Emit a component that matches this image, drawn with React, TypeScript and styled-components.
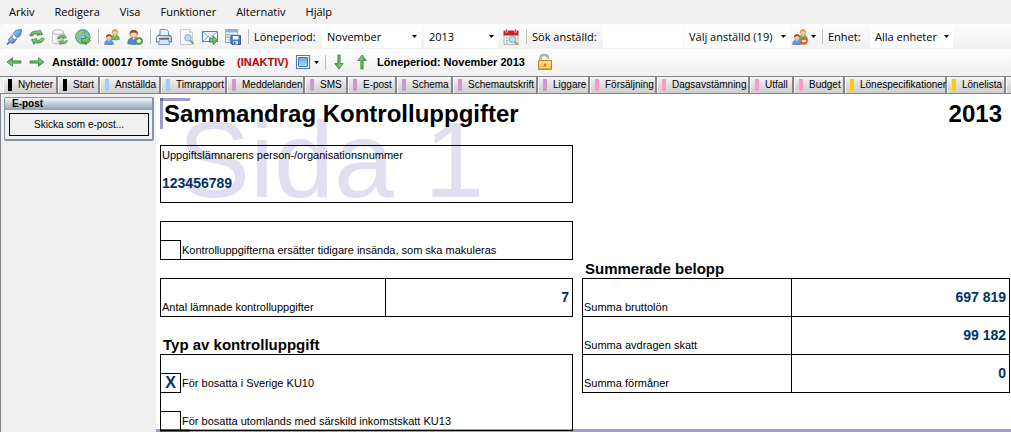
import React from "react";
import styled, { createGlobalStyle } from "styled-components";

const GlobalStyle = createGlobalStyle`
  *, *::before, *::after { box-sizing: border-box; }
  html, body, #root { height: 100%; }
  body { margin: 0; background: #f0f0f0; color: #000; font: 11px/14px "Liberation Sans", Arial, sans-serif; }
  button, input, select { font: inherit; color: inherit; margin: 0; border-radius: 0; }
  h1, h2, p { margin: 0; }
`;

const uiFont = `"Open Sans", "Segoe UI", sans-serif`;
const frame = "#84848e";
const value = "#003366";

const Window = styled.div`
  min-height: 100%;
  display: flex;
  flex-direction: column;
  overflow: hidden;
`;

const MenuBar = styled.nav`
  height: 24px;
  display: flex;
  align-items: center;
  gap: 20px;
  padding-left: 9px;
`;

const MenuItem = styled.button`
  padding: 0;
  border: 0;
  background: none;
  font: 11px/16px ${uiFont};
`;

const Bar = styled.div<{ $height: number }>`
  height: ${(p) => p.$height}px;
  flex: none;
  display: flex;
  align-items: center;
  padding-left: 6px;
  border-radius: 4px 0 0 4px;
  background: linear-gradient(#fdfdfd, #f0f0f0);
  font: 11px/16px ${uiFont};
  white-space: nowrap;
`;

const Tool = styled.button<{ $wide?: boolean }>`
  flex: none;
  width: ${(p) => (p.$wide ? 30 : 23)}px;
  height: 20px;
  padding: 0;
  border: 0;
  background: none;
  display: flex;
  align-items: center;
  gap: 3px;
  svg { flex: none; }
`;

const Separator = styled.span`
  flex: none;
  width: 1px;
  height: 15px;
  margin-right: 5px;
  background: #bdbdbd;
`;

const FieldLabel = styled.label<{ $width: number }>`
  flex: none;
  width: ${(p) => p.$width}px;
`;

const Picker = styled.span<{ $width: number; $gap?: number }>`
  position: relative;
  flex: none;
  width: ${(p) => p.$width}px;
  height: 23px;
  margin-right: ${(p) => p.$gap ?? 0}px;
  background: #fff;
  svg { position: absolute; right: 4px; top: 10px; pointer-events: none; }
`;

const Select = styled.select`
  appearance: none;
  width: 100%;
  height: 100%;
  padding: 0 0 0 5px;
  border: 0;
  background: none;
`;

const Search = styled.input`
  flex: none;
  width: 80px;
  height: 23px;
  margin-right: 1px;
  padding: 0 4px;
  border: 0;
  background: #fff;
`;

const Strong = styled.strong<{ $width: number; $alert?: boolean }>`
  flex: none;
  width: ${(p) => p.$width}px;
  font: bold 11px/14px "Liberation Sans", Arial, sans-serif;
  color: ${(p) => (p.$alert ? "#c00000" : "#000")};
`;

const Tabs = styled.div`
  flex: none;
  height: 18px;
  margin-top: 1px;
  display: flex;
  border-top: 1px solid ${frame};
  border-bottom: 1px solid ${frame};
  padding-left: 3px;
  overflow: hidden;
`;

const Tab = styled.button<{ $width: number }>`
  flex: none;
  width: ${(p) => p.$width}px;
  display: flex;
  align-items: center;
  padding: 0 0 0 4px;
  border: 0;
  border-left: 1px solid #fff;
  border-right: 2px solid ${frame};
  background: linear-gradient(#f6f6f6, #dedede 50%, #cfcfcf);
  font-size: 10px;
  white-space: nowrap;
`;

const TabMark = styled.span<{ $color: string }>`
  flex: none;
  width: 4px;
  height: 12px;
  margin-right: 6px;
  background: ${(p) => p.$color};
`;

const Body = styled.div`
  flex: 1;
  display: flex;
`;

const Sidebar = styled.aside`
  flex: none;
  width: 156px;
  padding: 3px 2px 0 3px;
  border-left: 1px solid ${frame};
`;

const Panel = styled.section`
  border: 1px solid #8494a4;
  border-right-width: 2px;
  border-bottom-width: 2px;
  border-radius: 2px;
  padding-bottom: 3px;
`;

const PanelTitle = styled.h2`
  padding-left: 7px;
  font-size: 10px;
  line-height: 12px;
  background: linear-gradient(#f4f6f8, #8ea0b2);
`;

const PanelButton = styled.button`
  display: block;
  width: calc(100% - 7px);
  height: 23px;
  margin: 3px 3px 0 4px;
  padding: 0;
  border: 1px solid #000;
  background: #f0f0f0;
  font-size: 10px;
`;

const Page = styled.main`
  position: relative;
  isolation: isolate;
  flex: 1;
  min-width: 0;
  padding: 7px 1px 1px 4px;
  background: #fff;
`;

const Watermark = styled.span`
  position: absolute;
  z-index: -1;
  left: 22px;
  top: 4px;
  font-size: 108px;
  line-height: 124px;
  color: #e0deef;
  white-space: nowrap;
`;

const Corner = styled.svg`
  position: absolute;
  z-index: -1;
  left: 4px;
  top: 4px;
`;

const PageEdge = styled.span`
  position: absolute;
  z-index: -1;
  left: 0;
  right: 0;
  bottom: 0;
  height: 3px;
  background: linear-gradient(to right, transparent 4px, #50509c 4px, #50509c 34px, transparent 34px), #9c9cce;
`;

const TitleRow = styled.header`
  display: flex;
  justify-content: space-between;
  padding: 0 8px 0 4px;
  margin-bottom: 18px;
  font-weight: bold;
  font-size: 24px;
  line-height: 26px;
`;

const Title = styled.h1`
  font: inherit;
`;

const Form = styled.div`
  display: grid;
  grid-template-columns: minmax(0, 413fr) minmax(0, 428fr);
  column-gap: 9px;
`;

const Box = styled.div`
  grid-column: 1;
  border: 1px solid #000;
  margin-bottom: 18px;
`;

const NumberBox = styled(Box)`
  padding: 2px 1px 11px;
`;

const BoldValue = styled.p`
  margin-top: 13px;
  font-weight: bold;
  font-size: 14px;
  line-height: 16px;
  color: ${value};
`;

const CheckBox = styled(Box)`
  display: flex;
  flex-direction: column;
  gap: 1px;
  &:last-child { margin-bottom: 0; }
`;

const CheckRow = styled.label`
  height: 37px;
  display: flex;
  align-items: flex-end;
  span { padding: 0 0 2px 1px; }
`;

const Check = styled.input`
  appearance: none;
  flex: none;
  width: 21px;
  height: 20px;
  margin: 0 0 -1px -1px;
  border: 1px solid #000;
  text-align: center;
  font-weight: bold;
  font-size: 16px;
  line-height: 18px;
  color: ${value};
  &:checked::after { content: "X"; }
`;

const Heading = styled.h2`
  padding-left: 3px;
  font-size: 15px;
  line-height: 18px;
`;

const SumHeading = styled(Heading)`
  grid-column: 2;
  align-self: end;
`;

const TypeHeading = styled(Heading)`
  margin-top: 19px;
`;

const Amounts = styled.table<{ $split: string }>`
  width: 100%;
  table-layout: fixed;
  border-collapse: collapse;
  tr { height: 38px; }
  th, td { border: 1px solid #000; }
  th { width: ${(p) => p.$split}; padding: 0 1px 2px; font-weight: normal; text-align: left; vertical-align: bottom; }
  td { padding: 10px 3px 0; font-weight: bold; font-size: 14px; line-height: 16px; text-align: right; vertical-align: top; color: ${value}; }
`;

const Caret = () => (
  <svg width="5" height="3" viewBox="0 0 5 3" aria-hidden="true"><path d="M0 0h5L2.5 3z" fill="#000" /></svg>
);

const Icon = ({ children }: { children: React.ReactNode }) => (
  <svg width="16" height="16" viewBox="0 0 16 16" aria-hidden="true">{children}</svg>
);

const HiddenDefs = styled.svg`
  position: absolute;
`;

const Gradients = () => (
  <HiddenDefs width="0" height="0" aria-hidden="true">
    <defs>
      <linearGradient id="green" x1="0" y1="0" x2="0" y2="1"><stop offset="0" stopColor="#a6dc98" /><stop offset="1" stopColor="#3f9a45" /></linearGradient>
      <linearGradient id="blue" x1="0" y1="0" x2="1" y2="1"><stop offset="0" stopColor="#b4d4f6" /><stop offset="1" stopColor="#3f78c4" /></linearGradient>
      <linearGradient id="sky" x1="0" y1="0" x2="0" y2="1"><stop offset="0" stopColor="#5fa4e0" /><stop offset="1" stopColor="#b9defa" /></linearGradient>
      <linearGradient id="gold" x1="0" y1="0" x2="0" y2="1"><stop offset="0" stopColor="#fce08a" /><stop offset="1" stopColor="#f0a02c" /></linearGradient>
      <linearGradient id="steel" x1="0" y1="0" x2="1" y2="0"><stop offset="0" stopColor="#ffffff" /><stop offset="1" stopColor="#c4c8cc" /></linearGradient>
    </defs>
  </HiddenDefs>
);

const PlugIcon = () => (
  <Icon>
    <path d="M1 15.5 3.5 13" stroke="#4468a8" strokeWidth="1.6" fill="none" />
    <path d="M2.5 10.5 5 7.5l4.5 4.5L7 14.2c-1.600.5-4-.6-4.500-3.700z" fill="url(#blue)" stroke="#3c62a8" strokeWidth=".8" />
    <path d="m5.500 7.500 1.700-1.500M9 11.300l1.700-1.600" stroke="#59749c" strokeWidth="1.200" />
    <path d="m7.200 4.500 2.500-3 2.800-.6L15.500.5l-.3 3-.8 2.700-3 2.700z" fill="url(#blue)" stroke="#3c62a8" strokeWidth=".8" />
  </Icon>
);

const Arrows = () => (
  <>
    <path d="M.8 6.500C1.500 3 5.500 1.200 9.500 2.300L11 .8l2.500 4.700-5.500.8L9 5C6.500 4.300 4.200 5 3.500 7z" fill="url(#green)" stroke="#3a8540" strokeWidth=".8" />
    <path d="M15.200 9.500c-.7 3.500-4.700 5.300-8.700 4.200L5 15.200 2.500 10.500l5.500-.8L7 11c2.500.7 4.800 0 5.500-2z" fill="url(#green)" stroke="#3a8540" strokeWidth=".8" />
  </>
);

const RefreshIcon = () => <Icon><Arrows /></Icon>;

const DatabaseIcon = () => (
  <Icon>
    <path d="M.5 3v9.500C.5 14 3 15 6 15s5.500-1 5.500-2.500V3z" fill="url(#steel)" stroke="#b0b4b8" strokeWidth=".8" />
    <ellipse cx="6" cy="3" rx="5.500" ry="2.300" fill="#f6f7f8" stroke="#b0b4b8" strokeWidth=".8" />
    <g transform="translate(5 5) scale(.7)"><Arrows /></g>
  </Icon>
);

const GlobeIcon = () => (
  <Icon>
    <circle cx="7.800" cy="7.800" r="7.200" fill="url(#sky)" stroke="#4a86a8" strokeWidth=".9" />
    <path d="M2.500 3.500C4 1.700 6.500 1 8.500 1.500L9 3.500 6.500 5 5 8 1.500 9.500C.8 7 1.200 5 2.500 3.500zM10 3l3.500 1.500 1 3.500-3 1-2.500-2zM5 9.500l4 1-.5 4C6 15 3.500 13.500 2.500 11.500z" fill="#8ccc80" stroke="#5aa85a" strokeWidth=".5" />
    <path d="M6.500 9.500h4V7.200L15.500 11.500l-5 4.300v-2.300h-4z" fill="url(#green)" stroke="#33803a" strokeWidth=".8" />
  </Icon>
);

const Person = ({ x, y, hair, body }: { x: number; y: number; hair: string; body: string }) => (
  <g transform={`translate(${x} ${y})`}>
    <path d="M.5 10.500C.5 7.500 2 6 5 6s4.500 1.500 4.500 4.500c-2 .8-7 .8-9 0z" fill={body} stroke="#00000050" strokeWidth=".6" />
    <path d="M3.800 6 5 7.800 6.200 6z" fill="#fff" />
    <circle cx="5" cy="3.500" r="2.700" fill="#f8cfa4" stroke="#b07848" strokeWidth=".5" />
    <path d="M2 3.800C1.800 1.300 3 .3 5 .3s3.200 1 3 3.500C7.200 2.600 6 2.300 5 2.300s-2.200.3-3 1.500z" fill={hair} />
  </g>
);

const PeopleIcon = ({ remove }: { remove?: boolean }) => (
  <Icon>
    <Person x={6} y={0} hair="#d8a040" body="#6cb860" />
    <Person x={0} y={5} hair="#8a4a24" body="#5a9ae4" />
    {remove && <><circle cx="12" cy="12" r="3.500" fill="#ee6a2c" stroke="#c04818" strokeWidth=".6" /><path d="M10 12h4" stroke="#fff" strokeWidth="1.500" /></>}
  </Icon>
);

const AddPersonIcon = () => (
  <Icon>
    <g transform="translate(0 .5) scale(1.350)"><Person x={0} y={0} hair="#8a4a24" body="#4a8ad8" /></g>
    <circle cx="12" cy="12" r="3.600" fill="#6aae58" stroke="#3f8038" strokeWidth=".7" />
    <path d="M10 12h4M12 10v4" stroke="#fff" strokeWidth="1.300" />
  </Icon>
);

const PrinterIcon = () => (
  <Icon>
    <path d="M1.500 7 3.500 4.500h9L14.500 7z" fill="#7c8894" />
    <path d="M4 .5h6.500l2 2V8H4z" fill="#e4f0fc" stroke="#5a90d0" strokeWidth=".9" />
    <path d="M.6 8.500C.6 7.300 1.200 6.700 2.500 6.700h11c1.300 0 1.900.6 1.900 1.800V13H.6z" fill="url(#steel)" stroke="#646c74" strokeWidth="1" />
    <path d="M3 9.500h10" stroke="#5c6268" strokeWidth="1.200" />
    <path d="M3.500 10.500h9l1 5h-11z" fill="#d8e8fa" stroke="#5a90d0" strokeWidth=".9" />
  </Icon>
);

const Lens = () => (
  <>
    <path d="m11 11 3.500 4" stroke="#b0906c" strokeWidth="2" />
    <circle cx="9" cy="8.800" r="3.300" fill="#bcdcf6" stroke="#86a8cc" strokeWidth="1" />
  </>
);

const PreviewIcon = () => (
  <Icon>
    <path d="M1.500.5h9l3 3v12h-12z" fill="#f8f9fa" stroke="#c0c4c8" strokeWidth=".9" />
    <path d="M10.500.5v3h3" fill="#e4e6e8" stroke="#c0c4c8" strokeWidth=".8" />
    <Lens />
  </Icon>
);

const MailIcon = () => (
  <Icon>
    <path d="M.5 2.500h15v10H.5z" fill="#f2f7fd" stroke="#4a7cc0" strokeWidth="1" />
    <path d="M.8 12.300 6 7.500M15.200 12.300 10 7.500M.8 2.800 8 9l7.200-6.200" fill="none" stroke="#6a9cd8" strokeWidth=".9" />
    <path d="M7.500 9.500h3.700V7l4.500 4.300-4.500 4.300v-2.500H7.500z" fill="url(#green)" stroke="#2f7a36" strokeWidth=".8" />
  </Icon>
);

const TableSaveIcon = () => (
  <Icon>
    <path d="M.5.500h12v13H.5z" fill="#fff" stroke="#86a4c8" strokeWidth=".9" />
    <path d="M1 1h11v2.500H1z" fill="#8cb4e2" />
    <path d="M1 5.800h11M1 8.300h11M1 10.800h11M4 4v9M8 4v9" stroke="#a8c0dc" strokeWidth=".8" />
    <path d="M1.500 5h2v1.200h-2zM1.500 7.500h2v1.200h-2z" fill="#74b868" />
    <path d="M5.800 6.500h9.700v9H7l-1.200-1.200z" fill="#4a7ec8" stroke="#2c5498" strokeWidth=".9" />
    <path d="M7.800 6.900h5.700v3.600H7.800z" fill="#eef4fc" /><path d="M8.300 12h4.700v3.400H8.300z" fill="#cfdcec" /><path d="M9 12.700h1.300v2.300H9z" fill="#2c5498" />
  </Icon>
);

const CalendarIcon = () => (
  <Icon>
    <path d="M1 3h14v12.500H1z" fill="#eef1f4" stroke="#a4aab0" strokeWidth=".8" />
    <path d="M.6 1.500h14.800v5H.6z" fill="#cc2222" />
    <path d="M3.500 0v3.500M12.500 0v3.500" stroke="#fff" strokeWidth="2" /><path d="M3.500 0v3M12.500 0v3" stroke="#707070" strokeWidth="1" />
    <path d="M3 9h2M3 11.500h2M3 14h2" stroke="#a0a8b0" strokeWidth="1" />
    <g transform="translate(.5 1.500)"><Lens /></g>
  </Icon>
);

const ArrowIcon = ({ turn }: { turn: number }) => (
  <Icon>
    <path transform={`rotate(${turn} 8 8)`} d="M1 6.900h8.500V3.800L15 8 9.500 12.200V9.100H1z" fill="url(#green)" stroke="#3c8a42" strokeWidth=".9" />
  </Icon>
);

const ViewIcon = () => (
  <Icon>
    <path d="M1.500 1.500h13v13h-13z" fill="#fff" stroke="#4c7cb8" strokeWidth="1.100" />
    <path d="M3.500 3.500h9v9h-9z" fill="url(#sky)" stroke="#3a6cae" strokeWidth=".9" />
  </Icon>
);

const LockIcon = () => (
  <Icon>
    <path d="M3.500 7V4.500C3.500 2 5 1 7.200 1S11 2.200 11 4.500" fill="none" stroke="#8c8c8c" strokeWidth="2.200" />
    <path d="M3.500 7V4.500C3.500 2 5 1 7.200 1S11 2.200 11 4.500" fill="none" stroke="#d4d4d4" strokeWidth=".9" />
    <path d="M1.500 6.500h13v9h-13z" fill="url(#gold)" stroke="#cc8420" strokeWidth="1" />
    <path d="M3 9h10M3 11.200h10M3 13.400h10" stroke="#fff0b8" strokeWidth=".8" />
    <path d="M7.400 9.500h1.300v3H7.400z" fill="#8a5a14" />
  </Icon>
);

const menus = ["Arkiv", "Redigera", "Visa", "Funktioner", "Alternativ", "Hjälp"];

const tabs: [string, string, number][] = [
  ["Nyheter", "#000", 55], ["Start", "#000", 42], ["Anställda", "#a4ccf4", 61], ["Timrapport", "#a4ccf4", 66],
  ["Meddelanden", "#cc99cc", 78], ["SMS", "#cc99cc", 43], ["E-post", "#cc99cc", 49], ["Schema", "#cc99cc", 56],
  ["Schemautskrift", "#cc99cc", 85], ["Liggare", "#cc99cc", 52], ["Försäljning", "#ff99cc", 67], ["Dagsavstämning", "#ff99cc", 93],
  ["Utfall", "#ff99cc", 44], ["Budget", "#ff99cc", 51], ["Lönespecifikationer", "#ffcc00", 102], ["Lönelista", "#ffcc00", 59],
];

const sums = [["Summa bruttolön", "697 819"], ["Summa avdragen skatt", "99 182"], ["Summa förmåner", "0"]];

export default function App() {
  return (
    <Window>
      <GlobalStyle />
      <Gradients />
      <MenuBar>{menus.map((m) => <MenuItem key={m}>{m}</MenuItem>)}</MenuBar>
      <Bar $height={25}>
        <Tool aria-label="Anslut"><PlugIcon /></Tool>
        <Tool aria-label="Uppdatera"><RefreshIcon /></Tool>
        <Tool aria-label="Synkronisera"><DatabaseIcon /></Tool>
        <Tool aria-label="Webb"><GlobeIcon /></Tool>
        <Separator />
        <Tool aria-label="Anställda"><PeopleIcon /></Tool>
        <Tool aria-label="Ny anställd"><AddPersonIcon /></Tool>
        <Separator />
        <Tool aria-label="Skriv ut"><PrinterIcon /></Tool>
        <Tool aria-label="Förhandsgranska"><PreviewIcon /></Tool>
        <Tool aria-label="Skicka"><MailIcon /></Tool>
        <Tool aria-label="Spara tabell"><TableSaveIcon /></Tool>
        <Separator />
        <FieldLabel $width={68} htmlFor="month">Löneperiod:</FieldLabel>
        <Picker $width={99} $gap={3}><Select id="month"><option>November</option></Select><Caret /></Picker>
        <Picker $width={74} $gap={5}><Select aria-label="År"><option>2013</option></Select><Caret /></Picker>
        <Tool aria-label="Kalender"><CalendarIcon /></Tool>
        <Separator />
        <FieldLabel $width={71} htmlFor="search">Sök anställd:</FieldLabel>
        <Search id="search" />
        <Picker $width={106} $gap={2}><Select aria-label="Välj anställd"><option>Välj anställd (19)</option></Select><Caret /></Picker>
        <Tool $wide aria-label="Urval"><PeopleIcon remove /><Caret /></Tool>
        <Separator />
        <FieldLabel $width={42} htmlFor="unit">Enhet:</FieldLabel>
        <Picker $width={83}><Select id="unit"><option>Alla enheter</option></Select><Caret /></Picker>
      </Bar>
      <Bar $height={26}>
        <Tool aria-label="Föregående"><ArrowIcon turn={180} /></Tool>
        <Tool aria-label="Nästa"><ArrowIcon turn={0} /></Tool>
        <Strong $width={185}>Anställd: 00017 Tomte Snögubbe</Strong>
        <Strong $width={58} $alert>(INAKTIV)</Strong>
        <Tool $wide aria-label="Visning"><ViewIcon /><Caret /></Tool>
        <Separator />
        <Tool aria-label="Ned"><ArrowIcon turn={90} /></Tool>
        <Tool aria-label="Upp"><ArrowIcon turn={-90} /></Tool>
        <Strong $width={160}>Löneperiod: November 2013</Strong>
        <Tool aria-label="Lås"><LockIcon /></Tool>
      </Bar>
      <Tabs>
        {tabs.map(([name, color, width]) => (
          <Tab key={name} $width={width}><TabMark $color={color} />{name}</Tab>
        ))}
        <Tab $width={55} aria-label="Fler" />
      </Tabs>
      <Body>
        <Sidebar>
          <Panel>
            <PanelTitle>E-post</PanelTitle>
            <PanelButton>Skicka som e-post...</PanelButton>
          </Panel>
        </Sidebar>
        <Page>
          <Watermark>Sida 1</Watermark>
          <Corner width="30" height="31" viewBox="0 0 30 31" aria-hidden="true"><path d="M0 0h30v3H3v28H0z" fill="#9c9cce" /><path d="M0 0h3v3H0z" fill="#6c6cb4" /></Corner>
          <PageEdge />
          <TitleRow><Title>Sammandrag Kontrolluppgifter</Title><span>2013</span></TitleRow>
          <Form>
            <NumberBox>
              <p>Uppgiftslämnarens person-/organisationsnummer</p>
              <BoldValue>123456789</BoldValue>
            </NumberBox>
            <CheckBox>
              <CheckRow><Check type="checkbox" /><span>Kontrolluppgifterna ersätter tidigare insända, som ska makuleras</span></CheckRow>
            </CheckBox>
            <SumHeading>Summerade belopp</SumHeading>
            <div>
              <Amounts $split="54.5%"><tbody><tr><th scope="row">Antal lämnade kontrolluppgifter</th><td>7</td></tr></tbody></Amounts>
              <TypeHeading>Typ av kontrolluppgift</TypeHeading>
              <CheckBox>
                <CheckRow><Check type="checkbox" defaultChecked /><span>För bosatta i Sverige KU10</span></CheckRow>
                <CheckRow><Check type="checkbox" /><span>För bosatta utomlands med särskild inkomstskatt KU13</span></CheckRow>
              </CheckBox>
            </div>
            <div>
              <Amounts $split="49%">
                <tbody>{sums.map(([k, v]) => <tr key={k}><th scope="row">{k}</th><td>{v}</td></tr>)}</tbody>
              </Amounts>
            </div>
          </Form>
        </Page>
      </Body>
    </Window>
  );
}
